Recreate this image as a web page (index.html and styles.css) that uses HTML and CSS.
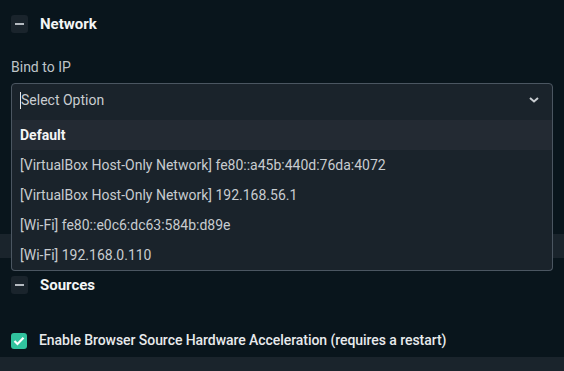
FILE: index.html
```html
<!DOCTYPE html>
<html lang="en">
<head>
    <meta charset="UTF-8">
    <meta name="viewport" content="width=device-width, initial-scale=1.0">
    <title>Settings - Advanced</title>
    <link rel="stylesheet" href="styles.css">
</head>
<body>
    <div class="section">
        <div class="section-header">
            <span class="collapse-btn"><span class="minus"></span></span>
            <h2>Network</h2>
        </div>

        <label class="field-label">Bind to IP</label>
        <div class="select">
            <div class="select-field">
                <span class="caret"></span>
                <span class="placeholder">Select Option</span>
                <svg class="chevron" width="10" height="6" viewBox="0 0 10 6">
                    <path d="M1 1 L5 4.5 L9 1" fill="none" stroke="#c9cdd1" stroke-width="2"/>
                </svg>
            </div>
            <ul class="select-menu">
                <li class="option active">Default</li>
                <li class="option">[VirtualBox Host-Only Network] fe80::a45b:440d:76da:4072</li>
                <li class="option">[VirtualBox Host-Only Network] 192.168.56.1</li>
                <li class="option">[Wi-Fi] fe80::e0c6:dc63:584b:d89e</li>
                <li class="option">[Wi-Fi] 192.168.0.110</li>
            </ul>
        </div>
    </div>

    <div class="divider"></div>

    <div class="section">
        <div class="section-header sources">
            <span class="collapse-btn"><span class="minus"></span></span>
            <h2>Sources</h2>
        </div>

        <label class="checkbox-row">
            <span class="checkbox">
                <svg width="12" height="10" viewBox="0 0 12 10">
                    <path d="M1.5 5 L4.5 8 L10.5 1.8" fill="none" stroke="#fff" stroke-width="2.2"/>
                </svg>
            </span>
            Enable Browser Source Hardware Acceleration (requires a restart)
        </label>
    </div>

    <div class="divider bottom"></div>
</body>
</html>
```

FILE: styles.css
```css
body {
    margin: 0;
    background: #09151c;
    font-family: Roboto, "Noto Sans", sans-serif;
    font-size: 14px;
    color: #d6d9dc;
    height: 371px;
    overflow: hidden;
}
.section {
    padding: 0 11px;
}
.section-header {
    display: flex;
    align-items: center;
    gap: 12px;
    height: 18px;
    padding-top: 15px;
}
.section-header.sources {
    padding-top: 18px;
}
.collapse-btn {
    width: 17px;
    height: 18px;
    border-radius: 3px;
    background: #1a242c;
    display: flex;
    align-items: center;
    justify-content: center;
}
.minus {
    width: 9px;
    height: 2px;
    background: #b4bac0;
}
h2 {
    margin: 0;
    font-size: 15px;
    font-weight: 700;
    color: #f4f5f6;
}
.field-label {
    display: block;
    margin-top: 26px;
    color: #bfc4c8;
    line-height: 17px;
}
.select {
    position: relative;
    margin-top: 7px;
    border: 1px solid #4b5661;
    border-radius: 4px 4px 0 0;
    background: #1a232b;
}
.select-field {
    height: 32px;
    display: flex;
    align-items: center;
    padding: 0 9px 4px 8px;
}
.caret {
    width: 1px;
    height: 17px;
    background: #e6e8ea;
}
.placeholder {
    flex: 1;
    color: #c9cdd1;
}
.chevron {
    margin-right: 4px;
}
.select-menu {
    position: absolute;
    top: 36px;
    left: -1px;
    right: -1px;
    margin: 0;
    padding: 0;
    list-style: none;
    background: #1a232b;
    border: 1px solid #4b5661;
    border-top: none;
    border-radius: 0 0 4px 4px;
    z-index: 2;
}
.option {
    height: 30px;
    line-height: 31px;
    padding: 0 8px;
    color: #c8ccd0;
    white-space: nowrap;
}
.option.active {
    background: #232a33;
    color: #f4f5f6;
    font-weight: 700;
}
.divider {
    height: 24px;
    margin-top: 113px;
    background: #1a242c;
}
.divider.bottom {
    margin-top: 8px;
    height: 20px;
}
.checkbox-row {
    display: flex;
    align-items: center;
    gap: 12px;
    margin-top: 38px;
    color: #e8eaec;
    font-weight: 500;
    letter-spacing: -0.06px;
    line-height: 17px;
}
.checkbox {
    width: 16px;
    height: 16px;
    border-radius: 3px;
    background: #31c39e;
    display: flex;
    align-items: center;
    justify-content: center;
}
```
